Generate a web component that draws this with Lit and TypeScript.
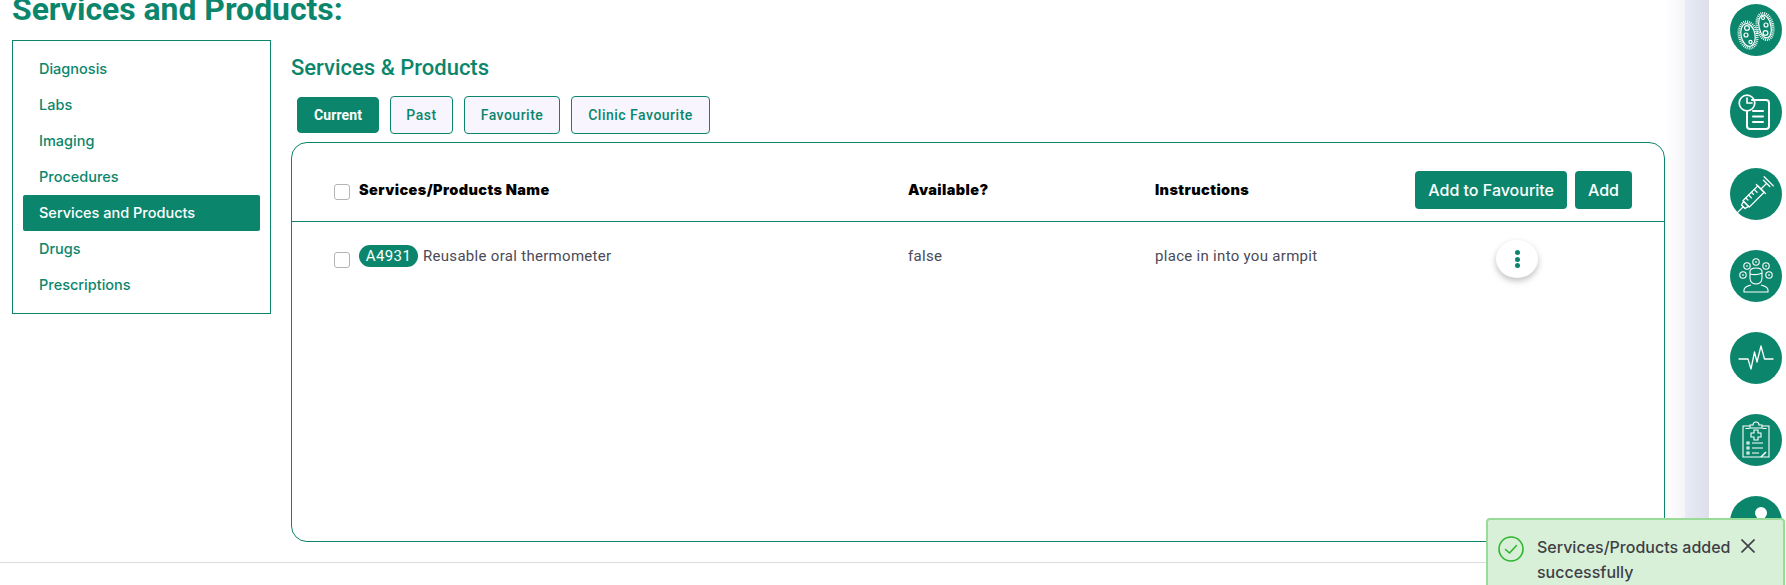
import { LitElement, html, css, svg } from "lit";
import { customElement } from "lit/decorators.js";

const icons = [
  svg`<g fill="none" stroke="#fff" stroke-width="1.200">
    <ellipse cx="18" cy="31" rx="7" ry="11.500" transform="rotate(-12 18 31)"/>
    <ellipse cx="18" cy="31" rx="9" ry="13.500" transform="rotate(-12 18 31)" stroke-width="2.600" stroke-dasharray=".9 1"/>
    <circle cx="17" cy="24" r="2.400"/><circle cx="16" cy="31" r="2"/><circle cx="20.500" cy="38" r="1.600"/>
    <ellipse cx="35" cy="22.500" rx="6" ry="11.500" transform="rotate(-12 35 22.500)"/>
    <ellipse cx="35" cy="22.500" rx="8" ry="13.500" transform="rotate(-12 35 22.500)" stroke-width="2.600" stroke-dasharray=".9 1"/>
    <circle cx="33" cy="14" r="1.500"/><circle cx="36" cy="21" r="2"/><circle cx="35.500" cy="29" r="2.400"/>
  </g>`,
  svg`<g fill="none" stroke="#fff" stroke-width="2" stroke-linecap="round">
    <path d="M22 14h14a3 3 0 0 1 3 3v23a3 3 0 0 1-3 3H20a3 3 0 0 1-3-3V26"/>
    <circle cx="17" cy="17" r="7.800" stroke-width="1.700"/><path d="M17 12v5h5" stroke-width="1.600"/>
    <path d="M23 25h10M23 30.500h10M23 36h10"/>
  </g>`,
  svg`<g fill="none" stroke="#fff" stroke-width="1.300" stroke-linecap="round" stroke-linejoin="round" transform="rotate(-45 26 26)">
    <path d="M-1 26H8"/><path d="M8 23.500l4-1V29.500l-4-1z"/>
    <rect x="12" y="21.500" width="21" height="9"/>
    <path d="M33 19.500v13M33 26h8M41 21.500v9M44 19.500v13"/>
    <path d="M16 21.500v3M20 21.500v4M24 21.500v3M28 21.500v4" />
  </g>`,
  svg`<g fill="none" stroke="#fff" stroke-width="1.100">
    <circle cx="17" cy="16" r="3.200"/><circle cx="26" cy="12" r="3.200"/><circle cx="36" cy="16" r="3.200"/><circle cx="13" cy="25" r="3.200"/><circle cx="39" cy="25" r="3.200"/>
    <path d="M20 21c1-4 11-4 12 0v7c0 4-3 6-6 6s-6-2-6-6z"/><path d="M20 24c4 1 8 1 12-1"/>
    <path d="M21 35c-4 1-7 2-7 5v2h24v-2c0-3-3-4-7-5"/>
    <path d="M17 15v2M26 11v2M36 15v2M13 24v2M39 24v2"/>
  </g>`,
  svg`<path d="M9 27h9l3 10 3.500-17 2.500 10 4-16 3.500 13h8.500" fill="none" stroke="#fff" stroke-width="1.300" stroke-linejoin="round" stroke-linecap="round"/>`,
  svg`<g fill="none" stroke="#fff" stroke-width="1.100">
    <path d="M20 12h-7v31h26V12h-7"/><path d="M15.500 14.500h4M32.500 14.500h4"/>
    <path d="M20 14v-3h3a3 3 0 0 1 6 0h3v3z"/>
    <path d="M24 16h4v3h3v4h-3v3h-4v-3h-3v-4h3z"/>
    <path d="M17 28h2v2h-2zM17 33h2v2h-2zM17 38h2v2h-2zM22 29h11M22 34h11M22 39h7"/>
    <path d="M31 43l5-5" stroke-width="1.600"/>
  </g>`,
  svg`<circle cx="31" cy="17" r="6" fill="#fff"/><path d="M20 52c0-14 22-14 22 0" fill="#fff"/>`,
];

@customElement("app-root")
export class AppRoot extends LitElement {
  static styles = css`
    :host { display: block; width: 1786px; height: 585px; overflow: hidden; position: relative; background: #fff; font-family: Roboto, sans-serif; }
    .page { display: flex; height: 585px; }
    .main { width: 1665px; flex: none; }
    .title { margin: -11px 0 11px 12px; font-size: 31.900px; line-height: 40px; font-weight: 700; color: #0b866c; }
    .content { display: flex; gap: 20px; align-items: flex-start; padding-left: 12px; }
    .side { width: 259px; height: 274px; box-sizing: border-box; border: 1px solid #0b866c; padding: 10px 10px 0; display: flex; flex-direction: column; }
    .side div { height: 36px; padding-left: 16px; border-radius: 2px; font: 500 14.500px/36px Inter, sans-serif; color: #0b866c; }
    .side .on { background: #0b866c; color: #fff; }
    .right { width: 1374px; flex: none; }
    h2 { margin: 11px 0 0; font-size: 22px; line-height: 34px; font-weight: 500; color: #0b866c; }
    .tabs { display: flex; gap: 11px; padding-left: 6px; margin-top: 11px; height: 38px; align-items: center; }
    .tab { box-sizing: border-box; height: 38px; border: 1px solid #0b866c; border-radius: 4px; background: #f8f5ff; color: #0b866c; font-size: 14px; font-weight: 500; letter-spacing: .5px; display: flex; align-items: center; justify-content: center; }
    .tab.on { background: #0b866c; color: #fff; font-weight: 700; height: 36px; letter-spacing: .1px; }
    .card { margin-top: 8px; height: 400px; box-sizing: border-box; border: 1px solid #0b866c; border-radius: 16px; }
    .row { display: grid; grid-template-columns: 42px 25px 549px 247px 200px 1fr; align-items: center; }
    .head { height: 79px; border-bottom: 1px solid #0b866c; box-sizing: border-box; padding-top: 14px; }
    .th { font: 900 14.500px Inter, sans-serif; letter-spacing: .4px; color: #000; }
    .box { grid-column: 2; width: 16px; height: 16px; box-sizing: border-box; border: 1px solid #b4b4b4; border-radius: 3px; background: #fff; margin-top: 6px; }
    .actions { display: flex; align-items: center; justify-content: flex-end; gap: 8px; padding-right: 32px; margin-top: 2px; }
    .btn { height: 38px; box-sizing: border-box; background: #0b866c; color: #fff; border-radius: 4px; font: 500 16px/38px Inter, sans-serif; padding: 0 13px; white-space: nowrap; }
    .body { height: 68px; }
    .body .box { margin-top: 8px; }
    .td { color: #4a4a58; font-size: 15px; letter-spacing: .3px; }
    .name { display: flex; align-items: center; gap: 5px; }
    .pill { background: #0b866c; color: #fff; border-radius: 11px; height: 22px; line-height: 22px; width: 59px; text-align: center; font-size: 15px; letter-spacing: .4px; }
    .menu-cell { padding-left: 141px; }
    .kebab { width: 42px; height: 38px; margin-top: 6px; border-radius: 50%; background: #fff; box-shadow: 0 3px 6px rgba(0,0,0,.25); display: flex; flex-direction: column; align-items: center; justify-content: center; gap: 1.500px; }
    .kebab i { width: 5px; height: 5px; border-radius: 50%; background: #0b866c; }
    .rule { height: 1px; background: #dcdcdc; margin-top: 20px; }
    .fade { width: 20px; flex: none; background: linear-gradient(90deg, #fff, #f5f5f9); }
    .strip { width: 24px; flex: none; background: linear-gradient(90deg, #e7ebf5, #dde0ea); }
    .rail { flex: 1; padding: 4px 0 0 21px; display: flex; flex-direction: column; gap: 30px; }
    .rail svg { display: block; width: 52px; height: 52px; flex: none; }
    .toast { position: absolute; left: 1486px; top: 518px; width: 299px; height: 90px; box-sizing: border-box; border: 2px solid #9bdb99; border-radius: 4px; background: #d8f0d8; display: flex; padding: 15px 0 0 10px; color: #3f3f46; font: 500 16px/25px Inter, sans-serif; }
    .toast .ok { width: 26px; height: 26px; flex: none; margin-top: 1px; }
    .toast .msg { width: 200px; margin: 0 0 0 13px; }
    .toast .x { width: 14px; height: 14px; flex: none; margin: 4px 0 0 4px; }
  `;

  render() {
    const items = ["Diagnosis", "Labs", "Imaging", "Procedures", "Services and Products", "Drugs", "Prescriptions"];
    const tabs: [string, number][] = [["Past", 63], ["Favourite", 96], ["Clinic Favourite", 139]];
    return html`
      <div class="page">
        <div class="main">
          <div class="title">Services and Products:</div>
          <div class="content">
            <div class="side">
              ${items.map((t) => html`<div class=${t === "Services and Products" ? "on" : ""}>${t}</div>`)}
            </div>
            <div class="right">
              <h2>Services &amp; Products</h2>
              <div class="tabs">
                <div class="tab on" style="width:82px">Current</div>
                ${tabs.map(([t, w]) => html`<div class="tab" style="width:${w}px">${t}</div>`)}
              </div>
              <div class="card">
                <div class="row head">
                  <span class="box"></span>
                  <span class="th">Services/Products Name</span>
                  <span class="th">Available?</span>
                  <span class="th">Instructions</span>
                  <div class="actions"><span class="btn">Add to Favourite</span><span class="btn">Add</span></div>
                </div>
                <div class="row body">
                  <span class="box"></span>
                  <span class="td name"><span class="pill">A4931</span>Reusable oral thermometer</span>
                  <span class="td">false</span>
                  <span class="td">place in into you armpit</span>
                  <div class="menu-cell"><div class="kebab"><i></i><i></i><i></i></div></div>
                </div>
              </div>
            </div>
          </div>
          <div class="rule"></div>
        </div>
        <div class="fade"></div>
        <div class="strip"></div>
        <div class="rail">
          ${icons.map((ic) => html`<svg viewBox="0 0 52 52"><circle cx="26" cy="26" r="26" fill="#0b866c"></circle>${ic}</svg>`)}
        </div>
      </div>
      <div class="toast">
        <svg class="ok" viewBox="0 0 26 26" fill="none" stroke="#2fb52f" stroke-width="1.600"><circle cx="13" cy="13" r="12"></circle><path d="M7.500 13.500l4 3.500 7-7.500" stroke-linecap="round" stroke-linejoin="round"></path></svg>
        <div class="msg">Services/Products added successfully</div>
        <svg class="x" viewBox="0 0 14 14" stroke="#3f3f46" stroke-width="1.600"><path d="M.5.5l13 13M13.500.5l-13 13"></path></svg>
      </div>
    `;
  }
}
